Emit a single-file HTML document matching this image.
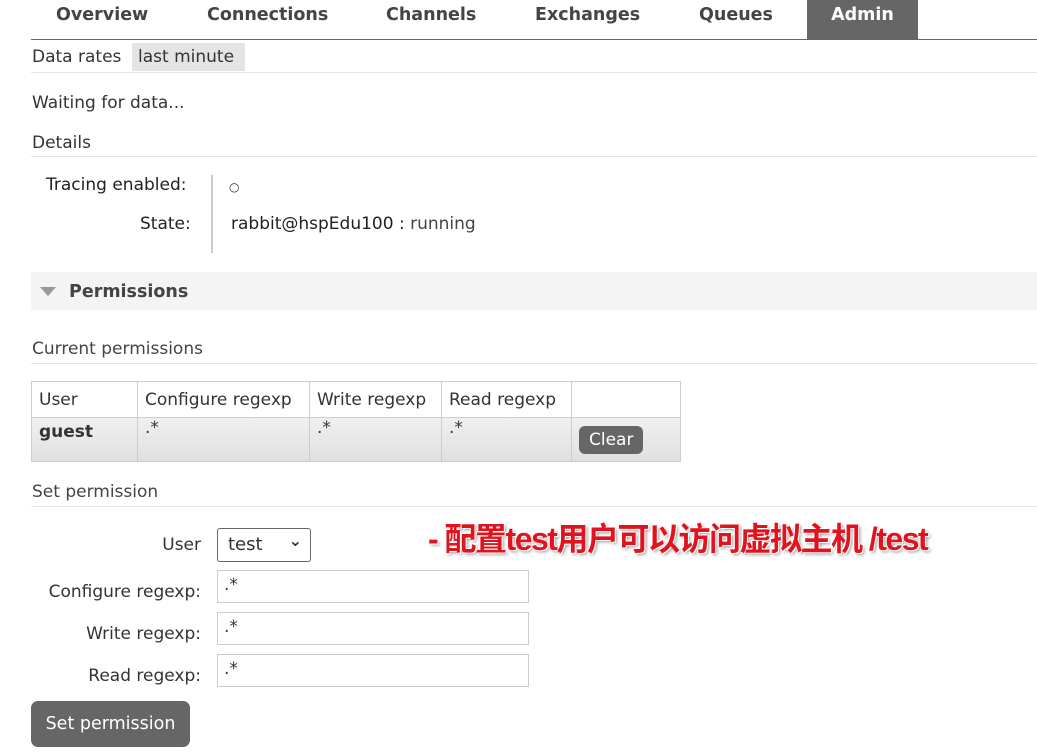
<!DOCTYPE html>
<html><head><meta charset="utf-8"><style>
body{margin:0;width:1037px;height:754px;background:#fff;font-family:"DejaVu Sans",sans-serif;color:#333;position:relative;overflow:hidden;font-size:17px}
.a{position:absolute;white-space:nowrap}
.tab{font-weight:bold;font-size:17.5px;color:#444;top:5px}
.line{position:absolute;height:1px;background:#e4e4e4}
.inp{position:absolute;left:217px;width:312px;height:33px;border:1px solid #ccc;box-sizing:border-box;font-size:17px;padding:4px 6px}
.lab{position:absolute;font-size:17px;text-align:right;width:201px;left:0}
td{border:1px solid #ccc;font-size:17px;padding:0 7px;height:34px}
</style></head><body>
<div class="a tab" style="left:56px">Overview</div>
<div class="a tab" style="left:207px">Connections</div>
<div class="a tab" style="left:386px">Channels</div>
<div class="a tab" style="left:535px">Exchanges</div>
<div class="a tab" style="left:699px">Queues</div>
<div class="a" style="left:807px;top:0;width:111px;height:39px;background:#666;color:#fff;font-weight:bold;font-size:17.5px;text-align:center;line-height:31px">Admin</div>
<div class="line" style="left:31px;top:39px;width:1006px;background:#666"></div>
<div class="a" style="left:32px;top:47px">Data rates</div>
<div class="a" style="left:132px;top:43px;width:113px;height:28px;background:#e4e4e4;line-height:29px;text-indent:6px">last minute</div>
<div class="line" style="left:31px;top:72px;width:1006px"></div>
<div class="a" style="left:32px;top:93px">Waiting for data...</div>
<div class="a" style="left:32px;top:133px">Details</div>
<div class="line" style="left:31px;top:156px;width:1006px"></div>
<div class="a" style="left:46px;top:175px;color:#222">Tracing enabled:</div>
<div class="a" style="left:140px;top:214px;color:#222">State:</div>
<div class="a" style="left:211px;top:175px;width:2px;height:78px;background:#ccc"></div>
<div class="a" style="left:229px;top:180px;font-size:12px">○</div>
<div class="a" style="left:231px;top:214px;color:#222">rabbit@hspEdu100 : <span style="color:#444">running</span></div>
<div class="a" style="left:31px;top:272px;width:1006px;height:38px;background:#f4f4f4"></div>
<div class="a" style="left:40px;top:287px;width:0;height:0;border-left:8px solid transparent;border-right:8px solid transparent;border-top:9px solid #999"></div>
<div class="a" style="left:69px;top:282px;font-size:17.5px;font-weight:bold;color:#444">Permissions</div>
<div class="a" style="left:32px;top:339px;color:#444">Current permissions</div>
<div class="line" style="left:31px;top:363px;width:1006px"></div>
<table class="a" style="left:31px;top:381px;border-collapse:collapse;width:650px">
<tr style="height:36px"><td style="width:91px">User</td><td style="width:157px">Configure regexp</td><td style="width:117px">Write regexp</td><td style="width:115px">Read regexp</td><td></td></tr>
<tr style="background:linear-gradient(#f0f0f0,#e0e0e0);height:44px"><td style="font-weight:bold;vertical-align:top;padding-top:4px">guest</td><td style="vertical-align:top">.*</td><td style="vertical-align:top">.*</td><td style="vertical-align:top">.*</td><td><span style="display:inline-block;background:#666;color:#fff;border-radius:6px;padding:4px 10px">Clear</span></td></tr>
</table>
<div class="a" style="left:32px;top:482px;color:#444">Set permission</div>
<div class="line" style="left:31px;top:506px;width:1006px"></div>
<div class="lab" style="top:535px">User</div>
<div class="a" style="left:217px;top:528px;width:94px;height:34px;border:1px solid #666;border-radius:3px;box-sizing:border-box;font-size:18px;padding:5px 10px">test<span style="position:absolute;right:8px;top:2px;font-size:16px;font-weight:bold">⌄</span></div>
<div class="lab" style="top:582px">Configure regexp:</div>
<div class="inp" style="top:570px">.*</div>
<div class="lab" style="top:624px">Write regexp:</div>
<div class="inp" style="top:612px">.*</div>
<div class="lab" style="top:666px">Read regexp:</div>
<div class="inp" style="top:654px">.*</div>
<div class="a" style="left:31px;top:701px;width:159px;height:46px;background:#666;color:#fff;border-radius:7px;font-size:17.5px;line-height:46px;text-align:center">Set permission</div>
<div class="a" style="left:428px;top:514px;font-size:32px;font-weight:bold;color:#e0141e;font-family:'Liberation Sans','Noto Sans CJK SC',sans-serif;text-shadow:1px 1px 0 #fff,-1px -1px 0 #fff,2px 2px 3px #999;letter-spacing:-1.5px">- 配置test用户可以访问虚拟主机 /test</div>
</body></html>
